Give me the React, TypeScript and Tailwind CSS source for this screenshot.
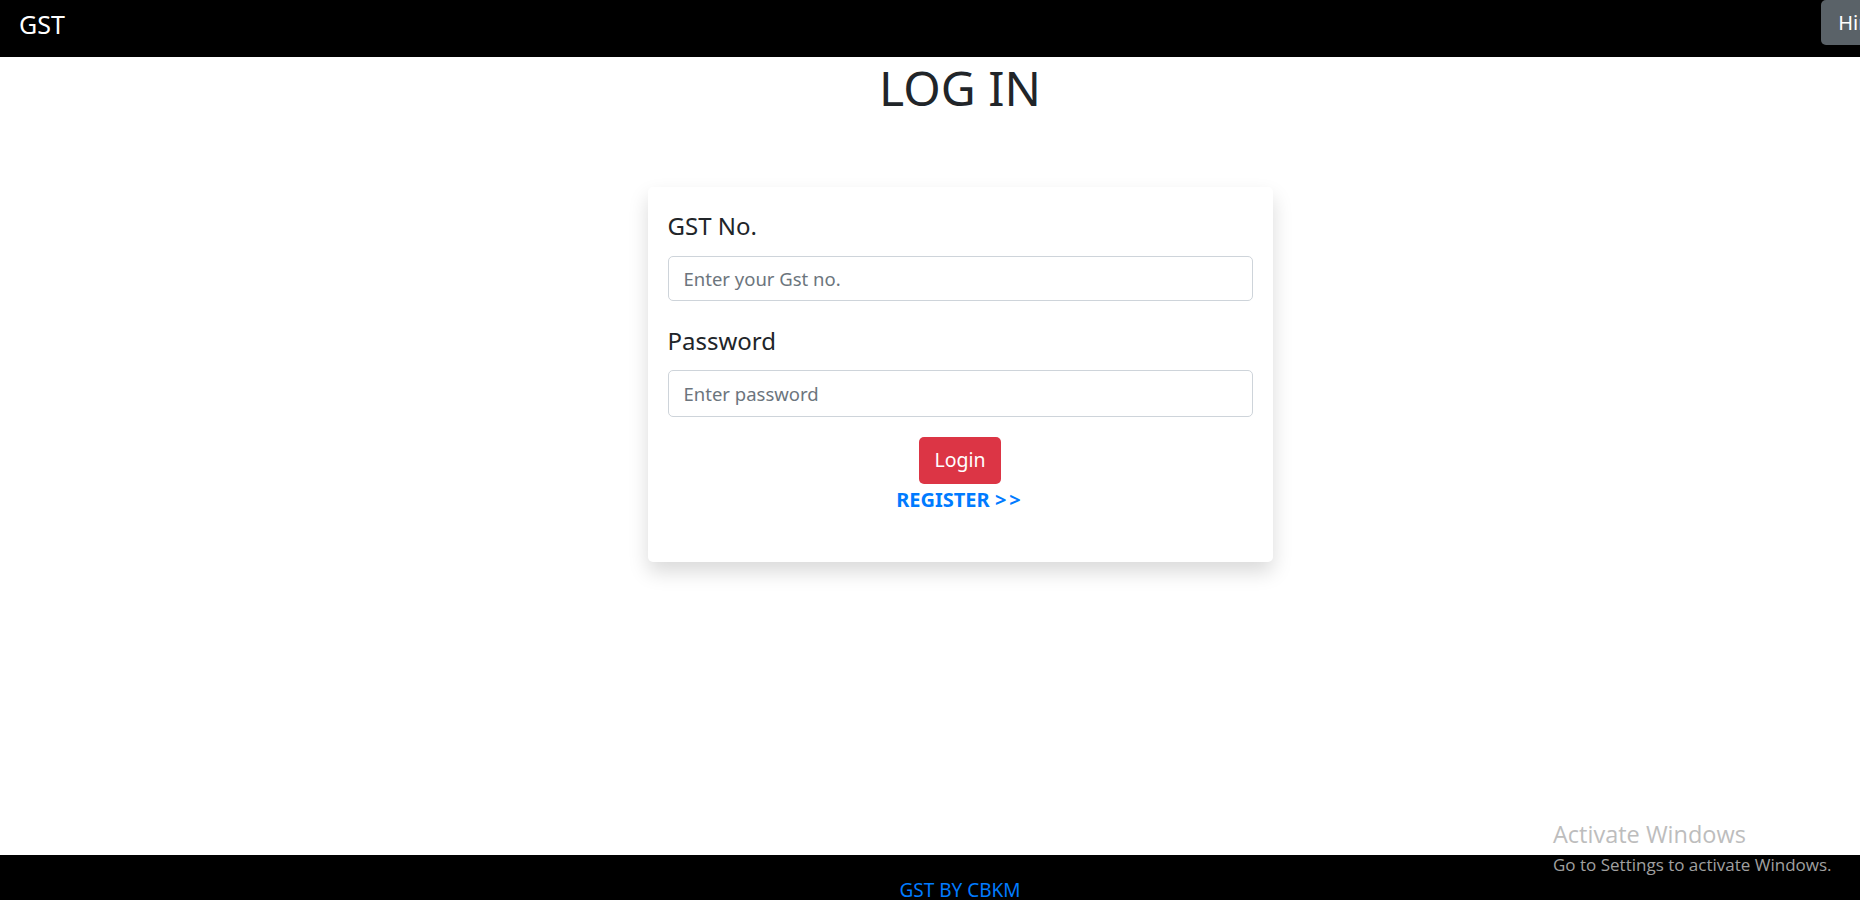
import React from 'react';

const font = { fontFamily: '"Noto Sans", "Open Sans", sans-serif' };

export default function App() {
  return (
    <div className="relative flex flex-col h-screen w-full overflow-hidden bg-white text-[#212529]" style={font}>
      {/* Navbar */}
      <nav className="flex h-[57px] shrink-0 bg-black overflow-hidden">
        <a className="pl-[19px] pt-[6px] text-[25px] leading-[1.5] text-white">GST</a>
        <button className="ml-auto mr-[-45px] h-[45px] shrink-0 self-start rounded-[5px] bg-[#5a6268] px-[17px] text-[20px] text-white">
          Hindi
        </button>
      </nav>

      {/* Main */}
      <main className="flex-1 flex flex-col">
        <h1 className="mt-[2px] pl-[60px] text-center text-[48px] leading-[1.2] font-normal text-[#212529]">LOG IN</h1>

        <div className="flex justify-center pl-[60px] mt-[70px]">
          <div className="w-[625px] rounded-[5px] bg-white px-[20px] pt-[21px] pb-[47px] shadow-[0_10px_20px_rgba(0,0,0,0.15)]">
            <label className="block text-[24px] leading-[1.5]">GST No.</label>
            <input
              className="mt-[12px] block h-[45px] w-full rounded-[5px] border border-[#ced4da] px-[15px] text-[18.5px] placeholder:text-[#6c757d] outline-none"
              placeholder="Enter your Gst no."
            />

            <label className="mt-[22px] block text-[24px] leading-[1.5]">Password</label>
            <input
              type="password"
              className="mt-[11px] block h-[47px] w-full rounded-[5px] border border-[#ced4da] px-[15px] text-[18.5px] placeholder:text-[#6c757d] outline-none"
              placeholder="Enter password"
            />

            <div className="mt-[20px] flex flex-col items-center">
              <button className="h-[47px] w-[82px] rounded-[5px] bg-[#dc3545] text-[19.5px] text-white">Login</button>
              <a className="mt-[1px] text-[20px] leading-[1.5] font-bold text-[#007bff]">
                REGISTER <span className="tracking-[3px]">&gt;&gt;</span>
              </a>
            </div>
          </div>
        </div>
      </main>

      {/* Footer */}
      <footer className="h-[45px] shrink-0 bg-black pl-[60px] pt-[21px] text-center">
        <span className="text-[19px] leading-[1.5] text-[#007bff]">GST BY CBKM</span>
      </footer>

      {/* Windows activation watermark */}
      <div className="pointer-events-none absolute left-[1553px] top-[819px]" style={{ fontFamily: '"Open Sans", "Noto Sans", sans-serif' }}>
        <div className="text-[23.5px] leading-[1.3] text-[#bdbdbd]">Activate Windows</div>
        <div className="mt-[4px] text-[17px] leading-[1.3] text-[#a0a0a0]">Go to Settings to activate Windows.</div>
      </div>
    </div>
  );
}
